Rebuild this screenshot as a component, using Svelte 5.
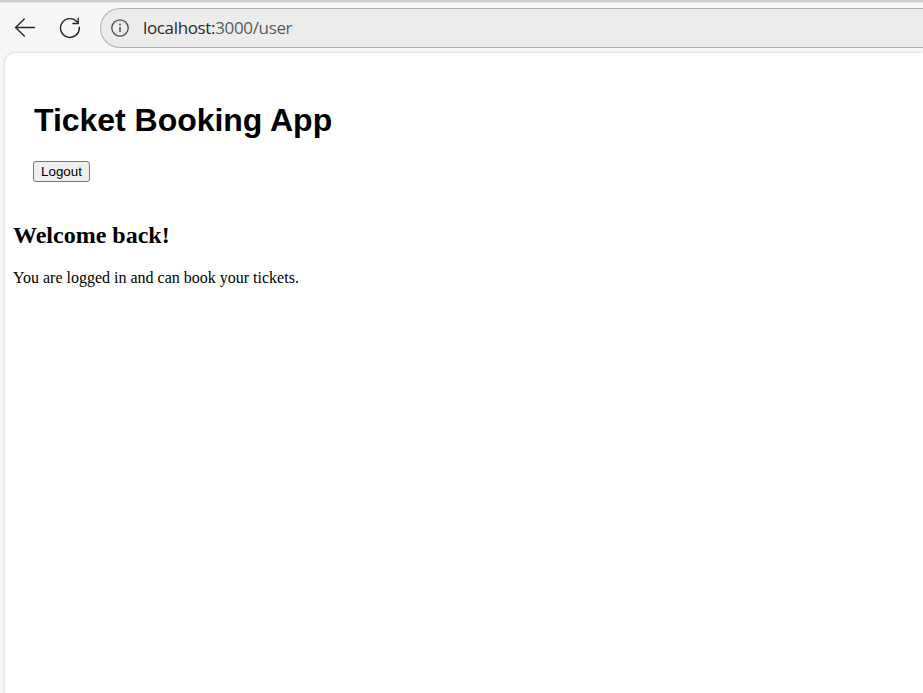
<script>
  const host = 'localhost:';
  const path = '3000/user';
</script>

<div class="browser">
  <div class="toolbar">
    <svg class="back" width="22" height="20" viewBox="0 0 22 20" fill="none" stroke="#262626" stroke-width="1.4" stroke-linecap="round" stroke-linejoin="round">
      <path d="M20.4 9.5H1.5M10.3 1.1 1.5 9.5l8.8 8.4" />
    </svg>
    <svg class="reload" width="22" height="22" viewBox="0 0 22 22" fill="none" stroke="#262626" stroke-width="1.4" stroke-linecap="round" stroke-linejoin="round">
      <path d="M20.3 10.3A9.4 9.4 0 1 1 18 4.8M19.2 1.2v5.3h-5.3" />
    </svg>
    <div class="address">
      <svg width="18" height="18" viewBox="0 0 18 18">
        <circle cx="9" cy="9" r="8.2" fill="none" stroke="#4d4d4d" stroke-width="1.3" />
        <path d="M9 8v5" stroke="#4d4d4d" stroke-width="1.5" />
        <circle cx="9" cy="5.5" r="0.95" fill="#4d4d4d" />
      </svg>
      <span class="url"><span class="host">{host}</span>{path}</span>
    </div>
  </div>
  <main>
    <header>
      <h1>Ticket Booking App</h1>
      <button type="button">Logout</button>
    </header>
    <h2>Welcome back!</h2>
    <p>You are logged in and can book your tickets.</p>
  </main>
</div>

<style>
  .browser {
    box-sizing: border-box;
    width: 100%;
    height: 693px;
    overflow: hidden;
    display: flex;
    flex-direction: column;
    background: #f7f7f7;
    border-top: 2px solid #cdcdcd;
    box-shadow: inset 0 1px #e2e2e2;
    padding-left: 5px;
  }
  .toolbar {
    box-sizing: border-box;
    height: 51px;
    flex: none;
    display: flex;
    align-items: flex-start;
    padding: 6px 0 0 9px;
  }
  .back { margin-top: 10px; }
  .reload { margin: 9px 0 0 23px; }
  .address {
    box-sizing: border-box;
    height: 40px;
    flex: 1;
    margin-left: 19px;
    display: flex;
    align-items: center;
    padding-left: 10px;
    background: #ececec;
    border: 1px solid #b3b3b3;
    border-right: 0;
    border-radius: 20px 0 0 20px;
  }
  .url {
    margin: -1px 0 0 14px;
    font: 400 17px/24px "Open Sans", "Noto Sans", sans-serif;
    letter-spacing: -0.35px;
    color: #5c5c5c;
    white-space: nowrap;
  }
  .host { color: #2b2b2b; }
  main {
    flex: 1;
    box-sizing: border-box;
    padding: 8px;
    background: #fff;
    border-radius: 10px 0 0 0;
    box-shadow: 0 0 3px rgba(0, 0, 0, 0.2);
    font: 16px "Liberation Serif", "Times New Roman", serif;
    color: #000;
  }
  header {
    padding: 20px;
    display: flex;
    flex-direction: column;
    align-items: flex-start;
  }
  h1 {
    margin: 21.44px 0;
    padding-left: 1px;
    letter-spacing: -0.03px;
    font: bold 32px/37px "Liberation Sans", Arial, sans-serif;
  }
  button {
    box-sizing: border-box;
    height: 21px;
    width: 57px;
    padding: 1px 6px;
    border: 1px solid #767676;
    border-radius: 3px;
    background: #efefef;
    color: #000;
    font: 13.333px/15px "Liberation Sans", Arial, sans-serif;
  }
  h2 {
    margin: 19.92px 0;
    font: bold 24px/27px "Liberation Serif", "Times New Roman", serif;
  }
  p { margin: 0; line-height: 18px; }
</style>
